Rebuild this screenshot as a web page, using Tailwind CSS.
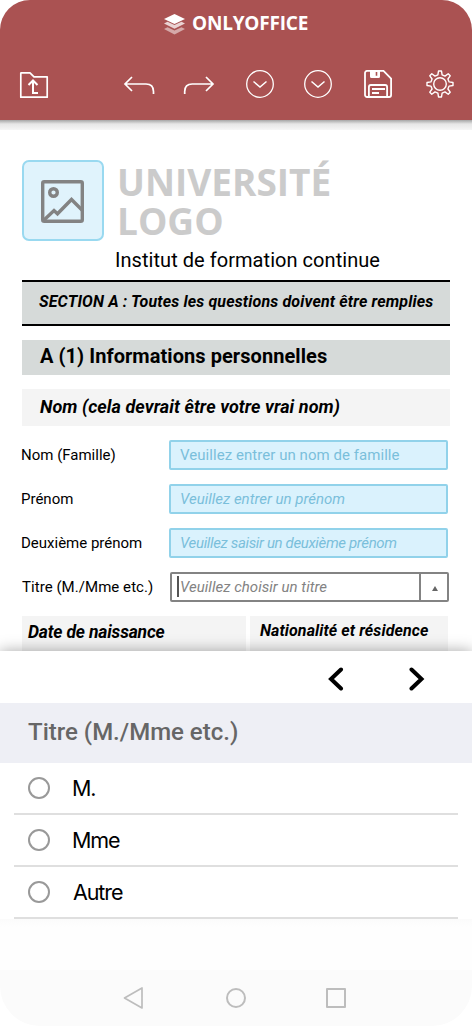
<!DOCTYPE html>
<html lang="fr">
<head>
<meta charset="utf-8">
<meta name="viewport" content="width=device-width, initial-scale=1">
<title>ONLYOFFICE</title>
<script src="https://cdn.jsdelivr.net/npm/@tailwindcss/browser@4"></script>
</head>
<body class="bg-white">
<div class="flex h-[1026px] w-[472px] flex-col overflow-hidden bg-white font-['Roboto',sans-serif] whitespace-nowrap text-black">
  <header class="z-10 h-[120px] shrink-0 rounded-t-[30px] bg-[#aa5252] text-white">
    <div class="flex h-[46px] items-center pl-[164px]">
      <svg class="mt-0.5 h-[21px] w-[21px]" viewBox="0 0 21 21" fill="currentColor"><path d="M10.500 0 21 5 10.500 10 0 5z"/><path opacity=".75" d="M0 9.500 3.500 7.800l7 3.300 7-3.300L21 9.500l-10.500 5.300z"/><path opacity=".5" d="M0 15 3.500 13.300l7 3.300 7-3.300L21 15l-10.500 5.500z"/></svg>
      <h1 class="ml-[7px] font-['Open_Sans',sans-serif] text-[19px] leading-[26px] font-bold tracking-[-0.2px]">ONLYOFFICE</h1>
    </div>
    <div class="flex h-[76px] items-center pl-[19px]">
      <svg class="mt-[2px] h-7 w-[30px]" viewBox="0 0 30 28" fill="none" stroke="currentColor" stroke-width="1.700"><path d="M2 1.800h9l4 4h13.200v20.400H1.800V2z" stroke-linejoin="round"/><path d="M19 22h-5V10M9.500 14 14 9.500l4.500 4.500" stroke-width="2"/></svg>
      <svg class="mt-[1px] ml-[74px] h-7 w-8" viewBox="0 0 32 28" fill="none" stroke="currentColor" stroke-width="1.700"><path d="M9 6 2 13l7 7M2 13h21q7.500 0 7.500 7.500V23"/></svg>
      <svg class="mt-[1px] ml-[28px] h-7 w-8" viewBox="0 0 32 28" fill="none" stroke="currentColor" stroke-width="1.700"><path d="m23 6 7 7-7 7M30 13H9.200Q1.700 13 1.700 20.500V23"/></svg>
      <svg class="ml-[31px] h-7 w-7" viewBox="0 0 28 28" fill="none" stroke="currentColor" stroke-width="1.300"><circle cx="14" cy="14" r="13.300"/><path d="m7.500 11.500 6.500 5.500 6.500-5.500" stroke-width="1.500"/></svg>
      <svg class="ml-[30px] h-7 w-7" viewBox="0 0 28 28" fill="none" stroke="currentColor" stroke-width="1.300"><circle cx="14" cy="14" r="13.300"/><path d="m7.500 11.500 6.500 5.500 6.500-5.500" stroke-width="1.500"/></svg>
      <svg class="ml-8 h-7 w-7" viewBox="0 0 28 28" fill="none" stroke="currentColor" stroke-width="1.800"><path d="M3 .900h16.500l7.600 7.600V25a2 2 0 0 1-2 2H3a2 2 0 0 1-2-2V3A2 2 0 0 1 3 .900z"/><path d="M4.900 27V17q0-2 2-2h14.200q2 0 2 2v10M8 19h13M8 23h7"/><path fill="currentColor" stroke="none" fill-rule="evenodd" d="M6 1h10v5.500a1.500 1.500 0 0 1-1.500 1.500h-7A1.500 1.500 0 0 1 6 6.500zM11.700 2v3.800h1.600V2z"/></svg>
      <svg class="ml-[34px] h-7 w-7" viewBox="0 0 28 28" fill="none" stroke="currentColor" stroke-width="1.400"><circle cx="14" cy="14" r="6.300"/><path stroke-linejoin="round" d="M12.500 1h3l.600 3.900 2.900 1.200 3.200-2.300 2 2-2.300 3.200 1.200 2.900 3.900.600v3l-3.900.600-1.200 2.900 2.300 3.200-2 2-3.200-2.300-2.900 1.200-.600 3.900h-3l-.600-3.900L9 21.900l-3.200 2.300-2-2L6.100 19l-1.200-2.900L1 15.500v-3l3.900-.600L6.100 9 3.800 5.800l2-2L9 6.100l2.900-1.200z"/></svg>
    </div>
  </header>
  <div class="h-[10px] shrink-0 bg-linear-to-b from-[#a6a6a6] via-[#e6e6e6] via-40% to-[#f6f6f6]"></div>

  <main class="h-[521px] shrink-0 overflow-hidden px-[22px] pt-[30px]">
    <div class="flex h-[81px]">
      <div class="flex h-[81px] w-[82px] items-center justify-center rounded-[7px] border-2 border-[#99d9f0] bg-[#e0f3fc]">
        <svg class="mt-[2px] mr-px h-[43px] w-[43px]" viewBox="0 0 43 43" fill="none" stroke="#838383" stroke-width="3.400"><rect x="1.700" y="1.700" width="39.600" height="39.600" rx="1.500"/><circle cx="12.500" cy="12.500" r="3.800"/><path d="m2.500 40.500 10.500-10 3.500 3.300 14-14.300L41 30"/></svg>
      </div>
      <div class="ml-[13px] pt-[2px] font-['Open_Sans',sans-serif] text-[37px] leading-[39px] font-bold text-[#cbcbcb]">UNIVERSITÉ<br>LOGO</div>
    </div>
    <p class="mt-[6px] ml-[93px] pt-px text-[20px] leading-6 tracking-[0.05px]">Institut de formation continue</p>
    <div class="mt-[8px] h-[46px] w-[428px] border-y-2 border-black bg-[#d6dad9] pt-[8px] pl-[17px] text-[16px] leading-6 font-bold tracking-[0.15px] italic">SECTION A : Toutes les questions doivent être remplies</div>
    <h2 class="mt-[14px] h-[35px] w-[428px] bg-[#d6dad9] pt-[4px] pl-[18px] text-[20px] leading-6 font-bold tracking-[0.06px]">A (1) Informations personnelles</h2>
    <h3 class="mt-[14px] h-[37px] w-[428px] bg-[#f4f4f4] pt-[6px] pl-[18px] text-[18px] leading-6 font-bold tracking-[0.07px] italic">Nom (cela devrait être votre vrai nom)</h3>

    <div class="mt-[14px] -ml-px flex flex-col gap-[14px] text-[15px] leading-[26px]">
      <div class="flex h-[30px]"><span class="w-[148px] pt-[2px]">Nom (Famille)</span><div class="w-[279px] rounded-[2px] border-2 border-[#91d2ea] bg-[#daf2fd] pl-[9px] tracking-[0.05px] text-[#7abfdb]">Veuillez entrer un nom de famille</div></div>
      <div class="flex h-[30px]"><span class="w-[148px] pt-[2px]">Prénom</span><div class="w-[279px] rounded-[2px] border-2 border-[#91d2ea] bg-[#daf2fd] pl-[9px] text-[#7abfdb] italic">Veuillez entrer un prénom</div></div>
      <div class="flex h-[30px]"><span class="w-[148px] pt-[2px]">Deuxième prénom</span><div class="w-[279px] rounded-[2px] border-2 border-[#91d2ea] bg-[#daf2fd] pl-[9px] tracking-[-0.35px] text-[#7abfdb] italic">Veuillez saisir un deuxième prénom</div></div>
      <div class="flex h-[30px]"><span class="w-[149px] pt-[2px] pl-px tracking-[0.05px]">Titre (M./Mme etc.)</span>
        <div class="flex w-[279px] rounded-[2px] border-2 border-[#838383] bg-white text-[#838383] italic">
          <i class="mt-[2px] ml-[5px] h-[21px] w-[2px] bg-[#555]"></i><span class="ml-px flex-1 tracking-[0.03px]">Veuillez choisir un titre</span>
          <span class="flex w-[28px] items-center justify-center border-l-2 border-[#838383]"><svg class="mt-[3px] ml-px h-[5px] w-[6px]" viewBox="0 0 6 5"><path fill="#666" d="m3 0 3 5H0z"/></svg></span>
        </div>
      </div>
    </div>
    <div class="mt-[14px] flex gap-1 leading-6 font-bold italic">
      <div class="h-[35px] w-[224px] bg-[#f4f4f4] pt-[4px] pl-[6px] text-[17.500px] tracking-[-0.17px]">Date de naissance</div>
      <div class="h-[35px] w-[198px] bg-[#f4f4f4] pt-[3px] pl-[10px] text-[16px] tracking-[0.1px]">Nationalité et résidence</div>
    </div>
  </main>

  <section class="z-10 h-[268px] shrink-0 bg-white shadow-[0_0_14px_rgba(0,0,0,0.35)]">
    <div class="flex h-[52px] items-center pt-1 pl-[328px]">
      <svg class="h-6 w-4" viewBox="0 0 16 24" fill="none" stroke="#000" stroke-width="4" stroke-linecap="round"><path d="M13 2.500 3 12l10 9.500"/></svg>
      <svg class="ml-[65px] h-6 w-4" viewBox="0 0 16 24" fill="none" stroke="#000" stroke-width="4" stroke-linecap="round"><path d="M2.500 2.500 12.500 12l-10 9.500"/></svg>
    </div>
    <h2 class="h-[60px] bg-[#eeeff5] pt-[14px] pl-[28px] text-[24px] leading-[30px] font-medium text-[#666]">Titre (M./Mme etc.)</h2>
    <ul class="mx-[14px] font-['Inter',sans-serif] text-[21.500px] tracking-[-1.100px]">
      <li class="flex h-[52px] items-center border-b-2 border-[#dfdfdf] pl-[14px]"><i class="mr-[22px] h-[22px] w-[22px] rounded-full border-2 border-[#999]"></i>M.</li>
      <li class="flex h-[52px] items-center border-b-2 border-[#dfdfdf] pl-[14px]"><i class="mr-[22px] h-[22px] w-[22px] rounded-full border-2 border-[#999]"></i>Mme</li>
      <li class="flex h-[52px] items-center border-b-2 border-[#dfdfdf] pl-[14px]"><i class="mr-[23px] h-[22px] w-[22px] rounded-full border-2 border-[#999]"></i>Autre</li>
    </ul>
  </section>
  <div class="z-10 h-[51px] shrink-0 bg-[#fefefe]"><div class="h-2 bg-linear-to-b from-[#fbfbfb] to-[#fefefe]"></div></div>
  <nav class="z-10 flex h-[56px] shrink-0 items-center rounded-b-[40px] bg-[#fbfbfb] pl-[123px] text-[#bdbdbd]">
    <svg class="h-[22px] w-[21px]" viewBox="0 0 21 22" fill="none" stroke="currentColor" stroke-width="1.700" stroke-linejoin="round"><path d="M19 1v20L1.500 11z"/></svg>
    <i class="ml-[82px] h-5 w-5 rounded-full border-2 border-current"></i>
    <i class="ml-[80px] h-5 w-5 rounded-[1px] border-2 border-current"></i>
  </nav>
</div>
</body>
</html>
